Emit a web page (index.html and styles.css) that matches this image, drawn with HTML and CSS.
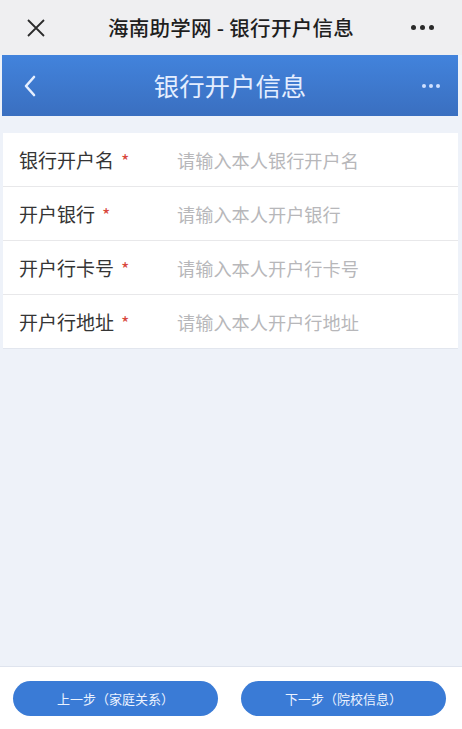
FILE: index.html
```html
<!DOCTYPE html>
<html lang="zh-CN">
<head>
<meta charset="utf-8">
<title>银行开户信息</title>
<link rel="stylesheet" href="styles.css">
</head>
<body>
<div class="page">
  <div class="topbar">
    <svg class="close" width="20" height="20" viewBox="0 0 20 20"><path d="M2 2 L18 18 M18 2 L2 18" stroke="#2b2b2b" stroke-width="1.8" fill="none"/></svg>
    <div class="toptitle">海南助学网 - 银行开户信息</div>
    <div class="topdots"><span></span><span></span><span></span></div>
  </div>
  <div class="header">
    <svg class="back" width="14" height="22" viewBox="0 0 14 22"><path d="M11 2 L3 11 L11 20" stroke="#e6efff" stroke-width="2.6" fill="none" stroke-linecap="round" stroke-linejoin="round"/></svg>
    <div class="htitle">银行开户信息</div>
    <div class="hdots"><span></span><span></span><span></span></div>
  </div>
  <div class="content">
    <div class="form">
      <div class="row"><div class="label">银行开户名<span class="req">*</span></div><div class="ph">请输入本人银行开户名</div></div>
      <div class="row"><div class="label">开户银行<span class="req">*</span></div><div class="ph">请输入本人开户银行</div></div>
      <div class="row"><div class="label">开户行卡号<span class="req">*</span></div><div class="ph">请输入本人开户行卡号</div></div>
      <div class="row"><div class="label">开户行地址<span class="req">*</span></div><div class="ph">请输入本人开户行地址</div></div>
    </div>
  </div>
  <div class="footer">
    <div class="btn">上一步（家庭关系）</div>
    <div class="btn">下一步（院校信息）</div>
  </div>
</div>
</body>
</html>
```
FILE: styles.css
```css
html, body {
  margin: 0;
  padding: 0;
}
body {
  font-family: "Noto Sans CJK SC", "Noto Sans", sans-serif;
  background: #eef2f9;
}
.page {
  width: 462px;
  height: 729px;
  display: flex;
  flex-direction: column;
  overflow: hidden;
}
.topbar {
  height: 55px;
  flex: none;
  background: #efeff1;
  display: flex;
  align-items: center;
  position: relative;
}
.close {
  margin-left: 26px;
}
.toptitle {
  position: absolute;
  left: 0;
  right: 0;
  text-align: center;
  font-size: 20.5px;
  font-weight: 500;
  color: #1e1e1e;
  line-height: 55px;
  letter-spacing: 0.3px;
}
.topdots {
  margin-left: auto;
  margin-right: 28px;
  display: flex;
  gap: 4px;
}
.topdots span {
  width: 5px;
  height: 5px;
  border-radius: 50%;
  background: #2a2a2a;
}
.header {
  height: 61px;
  flex: none;
  margin: 0 4px 0 2px;
  background: linear-gradient(#4283dc, #3a6fc0);
  display: flex;
  align-items: center;
  position: relative;
}
.back {
  margin-left: 21px;
}
.htitle {
  position: absolute;
  left: 0;
  right: 0;
  text-align: center;
  font-size: 25.4px;
  color: #e4eeff;
  line-height: 61px;
}
.hdots {
  margin-left: auto;
  margin-right: 18px;
  display: flex;
  gap: 3px;
}
.hdots span {
  width: 4px;
  height: 4px;
  border-radius: 50%;
  background: #cfe0ff;
}
.content {
  flex: 1;
  padding-top: 17px;
}
.form {
  margin: 0 4px 0 3px;
  background: #fff;
  border-bottom: 1px solid #e2e6ee;
}
.row {
  height: 53px;
  display: flex;
  align-items: center;
  border-bottom: 1px solid #e8e8ea;
}
.row:last-child {
  border-bottom: none;
}
.label {
  width: 158px;
  padding-left: 16px;
  font-size: 19px;
  color: #353535;
  flex: none;
}
.req {
  color: #d8473c;
  margin-left: 7px;
  font-size: 18px;
}
.ph {
  font-size: 18.2px;
  color: #b7b7ba;
}
.footer {
  height: 62px;
  flex: none;
  background: #fff;
  border-top: 1px solid #dfe4ee;
  display: flex;
  align-items: center;
  justify-content: space-between;
  padding: 0 16px 0 13px;
}
.btn {
  width: 205px;
  height: 35px;
  border-radius: 18px;
  background: #3a7bd6;
  color: #eaf2ff;
  font-size: 13px;
  display: flex;
  align-items: center;
  justify-content: center;
}
```
